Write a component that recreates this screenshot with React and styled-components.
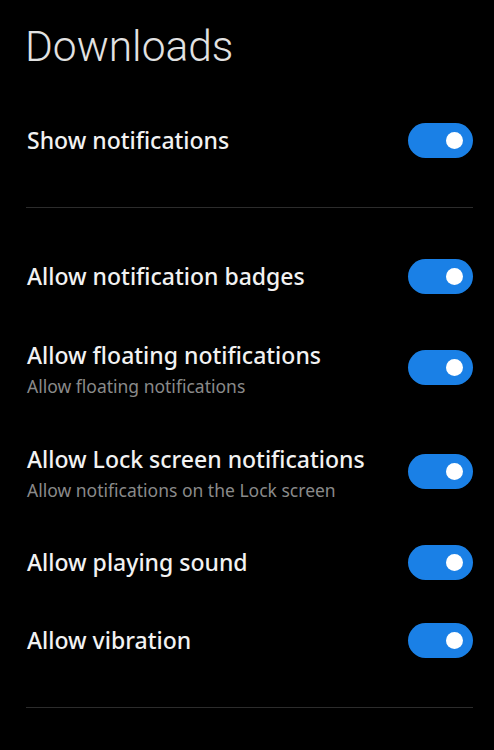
import React from "react";
import styled, { createGlobalStyle } from "styled-components";

const GlobalStyle = createGlobalStyle`
  html, body {
    margin: 0;
    padding: 0;
    background: #000;
  }
  body {
    font-family: "Noto Sans", Roboto, "Liberation Sans", sans-serif;
    -webkit-font-smoothing: antialiased;
  }
`;

const Page = styled.div`
  background: #000;
  min-height: 750px;
  padding: 0 21px 0 26px;
  box-sizing: border-box;
`;

const Title = styled.h1`
  margin: 0;
  padding: 22px 0 29px;
  margin-left: -1px;
  font-family: Roboto, "Noto Sans", sans-serif;
  font-size: 42.5px;
  line-height: 50px;
  font-weight: 300;
  color: #e2e2e2;
  letter-spacing: 0;
`;

const Section = styled.section`
  display: flex;
  flex-direction: column;
`;

const Divider = styled.hr`
  margin: 28px 0 29px;
  border: 0;
  height: 1px;
  background: #2c2c2c;
`;

const Row = styled.div`
  display: flex;
  align-items: center;
  justify-content: space-between;
  height: ${(p) => (p.$tall ? 104 : 78)}px;
`;

const TextBlock = styled.div`
  display: flex;
  flex-direction: column;
  gap: 5px;
  padding-left: 1px;
  padding-top: ${(p) => (p.$tall ? 4 : 0)}px;
`;

const Label = styled.div`
  font-size: 23px;
  line-height: 28px;
  font-weight: 500;
  color: #f2f2f2;
`;

const Sub = styled.div`
  font-size: 17.5px;
  line-height: 24px;
  font-weight: 400;
  color: #8a8a8a;
`;

const Track = styled.div`
  width: 65px;
  height: 35px;
  border-radius: 18px;
  background: ${(p) => (p.$on ? "#1a80e6" : "#3a3a3a")};
  display: flex;
  align-items: center;
  justify-content: ${(p) => (p.$on ? "flex-end" : "flex-start")};
  padding: 0 10px;
  box-sizing: border-box;
  flex-shrink: 0;
`;

const Knob = styled.div`
  width: 17px;
  height: 17px;
  border-radius: 50%;
  background: #fff;
`;

const Toggle = ({ on = true }) => (
  <Track $on={on}>
    <Knob />
  </Track>
);

const Setting = ({ label, sub }) => (
  <Row $tall={!!sub}>
    <TextBlock $tall={!!sub}>
      <Label>{label}</Label>
      {sub && <Sub>{sub}</Sub>}
    </TextBlock>
    <Toggle on />
  </Row>
);

export default function App() {
  return (
    <>
      <GlobalStyle />
      <Page>
        <Title>Downloads</Title>
        <Section>
          <Setting label="Show notifications" />
        </Section>
        <Divider />
        <Section>
          <Setting label="Allow notification badges" />
          <Setting
            label="Allow floating notifications"
            sub="Allow floating notifications"
          />
          <Setting
            label="Allow Lock screen notifications"
            sub="Allow notifications on the Lock screen"
          />
          <Setting label="Allow playing sound" />
          <Setting label="Allow vibration" />
        </Section>
        <Divider />
      </Page>
    </>
  );
}
